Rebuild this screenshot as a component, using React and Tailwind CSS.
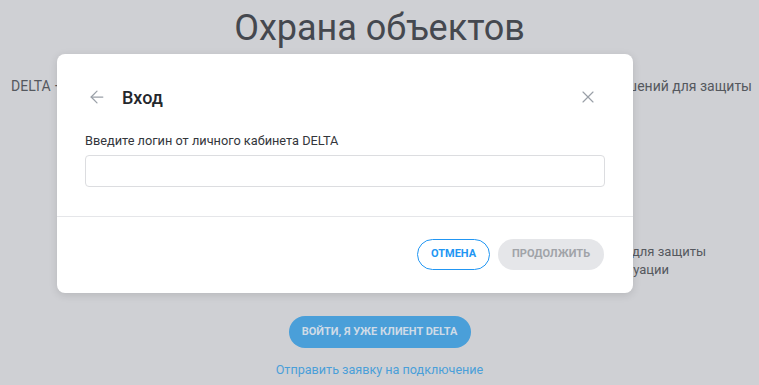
import { ArrowLeft, X } from "lucide-react";

export default function App() {
  return (
    <div
      className="relative h-[385px] w-[759px] overflow-hidden bg-[#cfd0d4]"
      style={{ fontFamily: "Roboto, 'Noto Sans', sans-serif" }}
    >
      {/* page behind the dimmed overlay */}
      <div className="flex flex-col items-center">
        <h1 className="pt-[7px] text-[36px] leading-[42px] text-[#45484f]">Охрана объектов</h1>
        <div className="mt-[27px] flex w-full justify-between pl-[11px] pr-[7px] text-[14px] leading-[20px] text-[#55585e]">
          <span>DELTA — надёжная охрана</span>
          <span>комплекс решений для защиты</span>
        </div>
        <div className="mt-[147px] w-full text-[13px] leading-[18px] text-[#55585e]">
          <div className="w-[706px] text-right">решений для защиты</div>
          <div className="w-[669px] text-right">в любой ситуации</div>
        </div>
        <button className="mt-[37px] h-[32px] w-[182px] rounded-full bg-[#4a9fd9] text-[11px] font-bold text-[#cfdbe7]">
          ВОЙТИ, Я УЖЕ КЛИЕНТ DELTA
        </button>
        <a className="mt-[13px] text-[12.6px] leading-[18px] text-[#4a9fd9]">Отправить заявку на подключение</a>
      </div>

      {/* modal */}
      <div className="absolute left-[57px] top-[54px] w-[576px] rounded-[8px] bg-white shadow-[0_2px_8px_rgba(0,0,0,0.12)]">
        <div className="mt-[31px] flex h-[24px] items-center pl-[30px] pr-[35px]">
          <ArrowLeft size={20} strokeWidth={1.5} className="text-[#9aa0a8]" />
          <span className="ml-[15px] text-[18px] font-medium text-[#24272c]">Вход</span>
          <X size={20} strokeWidth={1.4} className="ml-auto text-[#9aa0a8]" />
        </div>
        <div className="px-[28px] pb-[29px]">
          <div className="mt-[24px] text-[12.75px] leading-[16px] text-[#33363b]">
            Введите логин от личного кабинета DELTA
          </div>
          <input className="mt-[6px] h-[32px] w-full rounded-[4px] border border-[#dcdde0] px-3 text-[14px] outline-none" />
        </div>
        <div className="flex justify-end gap-[8px] border-t border-[#e5e6e9] pb-[23px] pl-[28px] pr-[29px] pt-[22px]">
          <button className="h-[31px] rounded-full border border-[#2196f3] px-[13px] text-[11px] font-bold text-[#2196f3]">
            ОТМЕНА
          </button>
          <button className="h-[31px] rounded-full bg-[#e5e6e9] px-[14px] text-[11px] font-bold text-[#a0a3a8]">
            ПРОДОЛЖИТЬ
          </button>
        </div>
      </div>
    </div>
  );
}
